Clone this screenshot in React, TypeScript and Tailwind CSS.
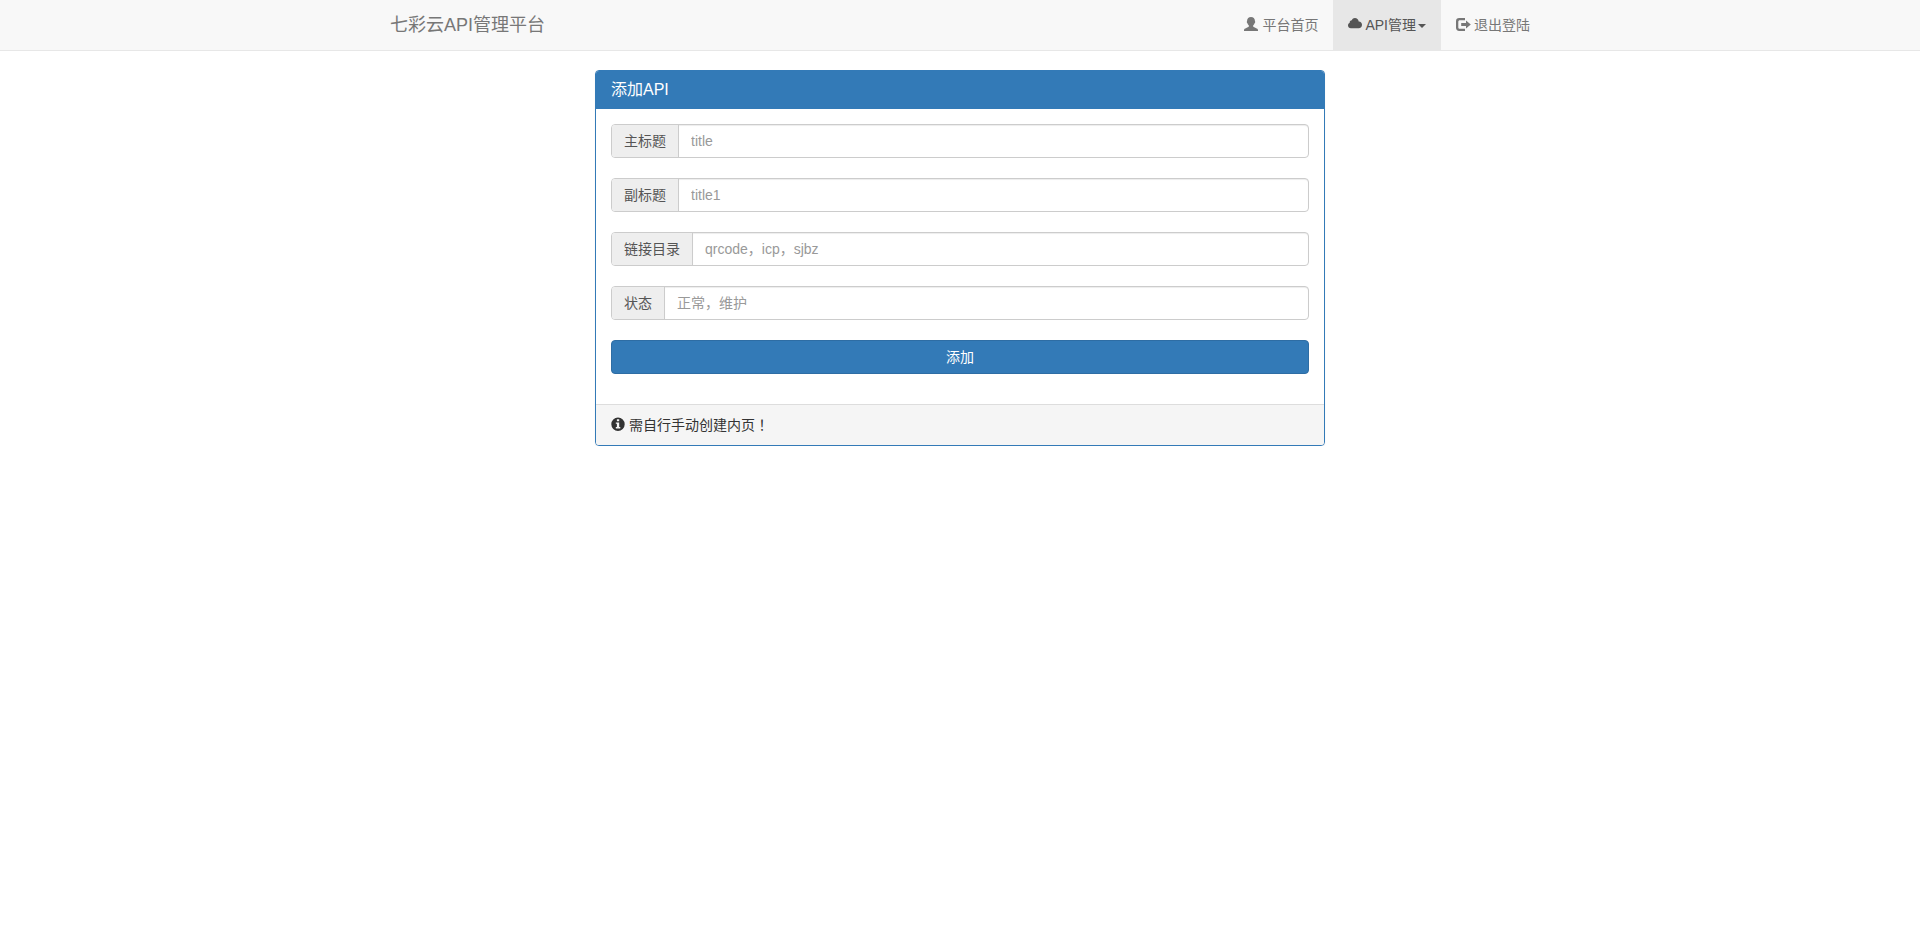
import { useState } from "react";
import type { FormEvent, ReactNode } from "react";

const fields = [
  { name: "title", label: "主标题", placeholder: "title" },
  { name: "title1", label: "副标题", placeholder: "title1" },
  { name: "url", label: "链接目录", placeholder: "qrcode，icp，sjbz" },
  { name: "status", label: "状态", placeholder: "正常，维护" },
];

function Icon({ children }: { children: ReactNode }) {
  return (
    <svg viewBox="0 0 14 14" className="mb-0.5 h-3.5 w-3.5 shrink-0 overflow-visible" fill="currentColor" aria-hidden="true">
      {children}
    </svg>
  );
}

function UserIcon() {
  return (
    <Icon>
      <path d="M7 0C9.300 0 10.900 1.500 10.900 3.700c0 .5.3.6.3 1.200 0 .7-.4.9-.6 1.400-.3.9-.8 1.500-1.400 2v1.200c.3.600 1.400.9 2.500 1.400 1.400.5 2.300 1 2.300 2.100v1H0v-1c0-1.100.9-1.600 2.300-2.100 1.100-.5 2.200-.8 2.500-1.400V8.300c-.6-.5-1.100-1.100-1.400-2-.2-.5-.6-.7-.6-1.400 0-.6.3-.7.3-1.200C3.100 1.500 4.700 0 7 0Z" />
    </Icon>
  );
}

function CloudIcon() {
  return (
    <Icon>
      <path d="M2.900 11.200C1.200 11.200 0 10 0 8.400 0 7.200.7 6.200 1.700 5.700 1.500 4.300 2.500 3.200 3.800 3.200 4.400 1.900 5.500 1.100 6.900 1.100c2 0 3.500 1.400 3.800 3.300C12.600 4.300 14 5.800 14 7.700c0 2-1.400 3.500-3.300 3.500Z" />
    </Icon>
  );
}

function LogoutIcon() {
  return (
    <Icon>
      <path d="M9 1v2.200H4c-1.100 0-1.700.6-1.700 1.600v5.400c0 1 .6 1.600 1.700 1.600h5V14H3.200C1.200 14 0 12.800 0 10.800V4.200C0 2.200 1.200 1 3.200 1Z" />
      <path d="M10 3.500 14.800 7.500 10 11.500V9.100H5.200V5.900H10Z" />
    </Icon>
  );
}

function InfoIcon() {
  return (
    <Icon>
      <path
        fillRule="evenodd"
        d="M7 .5a6.700 6.700 0 1 1 0 13.400A6.700 6.700 0 0 1 7 .5ZM5.900 2.300v1.900h2.300V2.300ZM4.800 5.600v1.200h1.100v3.300H4.800v1.400h4.500v-1.400H8.200V5.600Z"
      />
    </Icon>
  );
}

export default function App() {
  const [values, setValues] = useState<Record<string, string>>({});

  const handleSubmit = (e: FormEvent) => {
    e.preventDefault();
    setValues({});
  };

  return (
    <div className="font-['Liberation_Sans','Noto_Sans_CJK_SC',sans-serif] text-sm leading-5 text-[#333]">
      <nav className="border-b border-[#e7e7e7] bg-[#f8f8f8] text-[#777]">
        <div className="mx-auto flex max-w-[1170px] items-center justify-between">
          <a href="#" className="p-[15px] text-lg leading-5">
            七彩云API管理平台
          </a>
          <div className="flex">
            <a href="#" className="flex items-center gap-1 p-[15px]">
              <UserIcon />
              平台首页
            </a>
            <button type="button" aria-haspopup="menu" className="flex items-center gap-[3px] bg-[#e7e7e7] p-[15px] text-[#555]">
              <CloudIcon />
              <span className="flex items-center gap-0.5">
                API管理
                <svg viewBox="0 0 8 4" className="mt-0.5 h-1 w-2" fill="currentColor" aria-hidden="true">
                  <path d="M0 0h8L4 4Z" />
                </svg>
              </span>
            </button>
            <a href="#" className="flex items-center gap-1 p-[15px]">
              <LogoutIcon />
              退出登陆
            </a>
          </div>
        </div>
      </nav>

      <main className="mx-auto mt-[19px] max-w-[730px]">
        <section className="overflow-hidden rounded border border-[#337ab7] bg-white shadow-xs">
          <h3 className="bg-[#337ab7] px-[15px] py-[9px] text-base leading-5 text-white">添加API</h3>
          <form onSubmit={handleSubmit} className="flex flex-col gap-5 px-[15px] pt-[15px] pb-[30px]">
            {fields.map((field) => (
              <div key={field.name} className="flex h-[34px] rounded border border-[#ccc]">
                <label
                  htmlFor={field.name}
                  className="flex items-center rounded-l-[3px] border-r border-[#ccc] bg-[#eee] px-3 text-[#555]"
                >
                  {field.label}
                </label>
                <input
                  id={field.name}
                  type="text"
                  value={values[field.name] ?? ""}
                  onChange={(e) => setValues({ ...values, [field.name]: e.target.value })}
                  placeholder={field.placeholder}
                  className="min-w-0 flex-1 rounded-r-[3px] px-3 text-[#555] shadow-[inset_0_1px_1px_rgba(0,0,0,0.075)] outline-none placeholder:text-[#999]"
                />
              </div>
            ))}
            <button type="submit" className="h-[34px] rounded border border-[#2e6da4] bg-[#337ab7] text-white">
              添加
            </button>
          </form>
          <div className="flex items-center gap-1 border-t border-[#ddd] bg-[#f5f5f5] px-[15px] py-2.5 font-['Liberation_Sans','Noto_Sans_CJK_TC',sans-serif]">
            <InfoIcon />
            需自行手动创建内页！
          </div>
        </section>
      </main>
    </div>
  );
}
